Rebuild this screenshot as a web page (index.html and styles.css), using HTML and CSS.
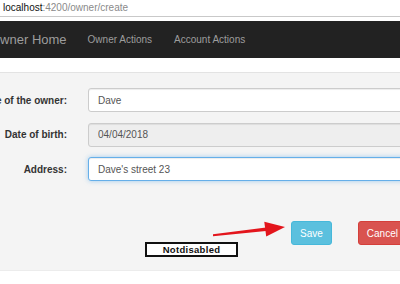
FILE: index.html
```html
<!DOCTYPE html>
<html lang="en">
<head>
	<meta charset="UTF-8">
	<title>Owner create</title>
	<link rel="stylesheet" href="styles.css">
</head>
<body>
<div class="urlbar"><span class="host">localhost</span>:4200/owner/create</div>

<div class="navbar">
  <a class="brand" href="#">Owner Home</a>
  <a class="navlink" href="#">Owner Actions</a>
  <a class="navlink" href="#">Account Actions</a>
</div>

<form class="well" name="form1" action="">
  <div class="row">
    <label class="lbl" for="name">Name of the owner:</label>
    <input class="field" id="name" type="text" value="Dave">
  </div>
  <div class="row">
    <label class="lbl" for="dob">Date of birth:</label>
    <input class="field" id="dob" type="text" value="04/04/2018" disabled>
  </div>
  <div class="row">
    <label class="lbl" for="address">Address:</label>
    <input class="field focused" id="address" type="text" value="Dave's street 23">
  </div>
  <div class="actions">
    <div class="status">Notdisabled</div>
    <button class="btn save" type="button">Save</button>
    <button class="btn cancel" type="button">Cancel</button>
  </div>
</form>

<!-- annotation arrow drawn on top of the screenshot -->
<svg class="arrow" width="400" height="284" viewBox="0 0 400 284">
  <polygon points="213,234.3 213,236.3 266,231 266,227.4" fill="#e3151c"/>
  <polygon points="285,227 264.3,221.8 266.2,236.5" fill="#e3151c"/>
</svg>
</body>
</html>
```

FILE: styles.css
```css
body {
    margin: 0;
    width: 400px;
    height: 284px;
    overflow: hidden;
    position: relative;
    background: #fff;
    font-family: "Liberation Sans", Arial, sans-serif;
}
.urlbar {
    height: 16px;
    line-height: 16px;
    padding-left: 3px;
    border-bottom: 1px solid #c9c9c9;
    font-size: 10px;
    color: #8a8a8a;
}
.host {
    color: #111;
}
.navbar {
    margin-top: 4px;
    height: 37px;
    background: #222;
    display: flex;
    align-items: center;
}
.navbar a {
    flex-shrink: 0;
    text-decoration: none;
    color: #9d9d9d;
}
.brand {
    margin-left: -10px;
    padding-right: 10px;
    font-size: 13px;
    color: #a8a8a8;
}
.navlink {
    padding: 0 11px;
    font-size: 10px;
}
.well {
    margin: 14px 0 0;
    padding: 15px 0 13px;
    background: #f4f4f4;
    border-top: 1px solid #e3e3e3;
    border-bottom: 1px solid #ececec;
}
.row {
    display: grid;
    grid-template-columns: 67px 420px;
    column-gap: 21px;
    align-items: center;
    margin-bottom: 10.5px;
}
.row:last-of-type {
    margin-bottom: 0;
}
.lbl {
    display: flex;
    justify-content: flex-end;
    white-space: nowrap;
    font-size: 10px;
    font-weight: bold;
    color: #333;
}
.field {
    box-sizing: border-box;
    height: 24px;
    margin: 0;
    padding: 0 9px;
    border: 1px solid #ccc;
    border-radius: 3px;
    background: #fff;
    box-shadow: inset 0 1px 1px rgba(0,0,0,.075);
    font-family: "Liberation Sans", Arial, sans-serif;
    font-size: 10px;
    color: #555;
    outline: none;
}
.field:disabled {
    background: #eee;
    color: #555;
}
.focused {
    border-color: #66afe9;
    box-shadow: inset 0 1px 1px rgba(0,0,0,.075), 0 0 5px rgba(102,175,233,.6);
}
.actions {
    display: flex;
    align-items: flex-start;
    margin-top: 40px;
}
.actions > * {
    flex-shrink: 0;
}
.status {
    box-sizing: border-box;
    width: 93px;
    height: 15px;
    margin: 21px 0 0 145px;
    border: 2px solid #111;
    background: #fff;
    font-size: 9.5px;
    font-weight: bold;
    letter-spacing: 0.3px;
    line-height: 11px;
    text-align: center;
    color: #111;
}
.btn {
    box-sizing: border-box;
    height: 24px;
    padding: 0 8px;
    border: 1px solid transparent;
    border-radius: 3px;
    font-family: "Liberation Sans", Arial, sans-serif;
    font-size: 10px;
    color: #fff;
}
.save {
    margin-left: 53px;
    background: #5bc0de;
    border-color: #46b8da;
}
.cancel {
    margin-left: 26px;
    padding-right: 14px;
    background: #d9534f;
    border-color: #d43f3a;
}
.arrow {
    position: absolute;
    left: 0;
    top: 0;
    pointer-events: none;
}
```
